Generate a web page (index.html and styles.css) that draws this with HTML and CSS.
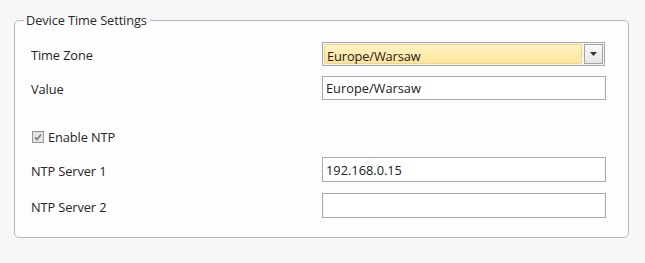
FILE: index.html
```html
<!DOCTYPE html>
<html lang="en">
<head>
  <meta charset="UTF-8" />
  <title>Device Time Settings</title>
  <link rel="stylesheet" href="styles.css">
</head>
<body>

  <fieldset class="group">
    <legend>Device Time Settings</legend>

    <div class="row row-zone">
      <label>Time Zone</label>
      <div class="combo">
        <div class="combo-field">Europe/Warsaw</div>
        <div class="combo-btn">
          <svg width="7" height="4" viewBox="0 0 7 4"><path d="M0 0h7L3.5 4z" fill="#333"/></svg>
        </div>
      </div>
    </div>

    <div class="row row-value">
      <label>Value</label>
      <input type="text" class="field" value="Europe/Warsaw">
    </div>

    <div class="row row-check">
      <span class="check">
        <svg width="12" height="12" viewBox="0 0 12 12">
          <rect x="0.5" y="0.5" width="11" height="11" fill="#e4e4e4" stroke="#959595"/>
          <path d="M3 6.2l2 2.2 4-5" fill="none" stroke="#7a7a7a" stroke-width="1.6"/>
        </svg>
      </span>
      <span>Enable NTP</span>
    </div>

    <div class="row row-ntp1">
      <label>NTP Server 1</label>
      <input type="text" class="field" value="192.168.0.15">
    </div>

    <div class="row row-ntp2">
      <label>NTP Server 2</label>
      <input type="text" class="field" value="">
    </div>
  </fieldset>

</body>
</html>
```

FILE: styles.css
```css
body {
  margin: 0;
  padding: 12px 0 0 14px;
  background: #f6f7f9;
  font-family: "Open Sans", Arial, sans-serif;
  font-size: 12.8px;
  letter-spacing: -0.1px;
  color: #262626;
}

.group {
  box-sizing: border-box;
  width: 615px;
  height: 226px;
  margin: 0;
  padding: 0 0 0 16px;
  border: 1px solid #b7b7b7;
  border-radius: 5px;
  background: #fdfdfd;
}

.group legend {
  margin-left: -7px;
  padding: 0 3px 0 2px;
  line-height: 16px;
  color: #2a2a2a;
}

.row {
  display: flex;
  align-items: center;
  height: 24px;
}

.row label {
  width: 291px;
  padding-top: 2px;
}

.row-zone { margin-top: 14px; }
.row-value { margin-top: 10px; }
.row-check { margin-top: 27px; height: 20px; }
.row-ntp1 { margin-top: 10px; height: 25px; }
.row-ntp2 { margin-top: 11px; height: 25px; }

.check {
  display: flex;
  margin: 0 4px 0 1px;
}

.field {
  box-sizing: border-box;
  width: 284px;
  height: 100%;
  margin: 0;
  padding: 0 3px;
  border: 1px solid #a8a8a8;
  background: #fff;
  font: inherit;
  color: #222;
  outline: none;
}

.combo {
  box-sizing: border-box;
  display: flex;
  align-items: center;
  gap: 2px;
  width: 283px;
  height: 24px;
  padding: 1px;
  border: 1px solid #a8a8a8;
  background: #f4f4f4;
}

.combo-field {
  flex: 1;
  box-sizing: border-box;
  height: 100%;
  padding: 2px 2px 0;
  border: 1px solid #eed58a;
  border-radius: 2px;
  background: linear-gradient(#fff2c4, #fde59a);
  color: #222;
}

.combo-btn {
  box-sizing: border-box;
  display: flex;
  align-items: center;
  justify-content: center;
  width: 19px;
  height: 100%;
  border: 1px solid #a4a4a4;
  background: linear-gradient(#fafafa, #e6e6e6);
}
```
